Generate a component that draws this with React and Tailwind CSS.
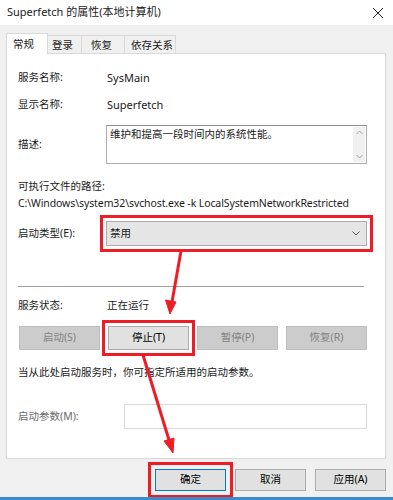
import React from 'react'

const font = { fontFamily: '"Noto Sans", "Noto Sans CJK SC", sans-serif' }

function Btn({ children, disabled, primary, className = '' }) {
  const tone = disabled
    ? 'bg-[#cccccc] border-[#bfbfbf] text-[#838383]'
    : primary
      ? 'bg-[#e1e1e1] border-[#0078d7] text-black'
      : 'bg-[#e1e1e1] border-[#adadad] text-black'
  return (
    <div className={`flex items-center justify-center border whitespace-nowrap ${tone} ${className}`}>
      {children}
    </div>
  )
}

function Row({ label, children, className = '' }) {
  return (
    <div className={`flex items-center ${className}`}>
      <div className="w-[89px] shrink-0">{label}</div>
      {children}
    </div>
  )
}

export default function App() {
  return (
    <div className="relative w-[393px] h-[500px] overflow-hidden bg-[#f0f0f0] text-[10.5px] text-[#1a1a1a]" style={font}>
      {/* title bar */}
      <div className="h-[25px] bg-white flex items-center justify-between pl-[7px] pr-[9px]">
        <span className="text-[11px]">Superfetch 的属性(本地计算机)</span>
        <svg width="12" height="12" viewBox="0 0 12 12" className="text-[#222]">
          <path d="M1 1L11 11M11 1L1 11" stroke="currentColor" strokeWidth="1" />
        </svg>
      </div>

      {/* tabs */}
      <div className="flex items-end h-[28px] pl-[6px] whitespace-nowrap">
        <div className="relative z-10 w-[42px] h-[21px] -mb-px bg-white border border-b-0 border-[#d9d9d9] pl-[6px] pt-[1px] leading-[18px]">常规</div>
        <div className="w-[34px] h-[18px] border border-l-0 border-b-0 border-[#d9d9d9] pl-[4px] leading-[18px]">登录</div>
        <div className="w-[43px] h-[18px] border border-l-0 border-b-0 border-[#d9d9d9] pl-[9px] leading-[18px]">恢复</div>
        <div className="w-[51px] h-[18px] border border-l-0 border-b-0 border-[#d9d9d9] pl-[6px] leading-[18px]">依存关系</div>
      </div>

      {/* panel */}
      <div className="mx-[6px] mr-[7px] h-[406px] bg-white border border-[#d9d9d9] pl-[11px] pr-[18px] pt-[16px]">
        <Row label="服务名称:" className="h-[16px]"><span className="text-[11px]">SysMain</span></Row>
        <Row label="显示名称:" className="h-[16px] mt-[11px]"><span className="text-[11px]">Superfetch</span></Row>
        <Row label="描述:" className="mt-[12px]">
          <div className="flex w-[261px] h-[39px] -ml-px border border-[#abadb3] border-t-[#8e8f8f]">
            <div className="flex-1 pl-[3px] pt-[1px] leading-[14px]">维护和提高一段时间内的系统性能。</div>
            <div className="w-[12px] my-[1px] mr-[1px] bg-[#f0f0f0] flex flex-col justify-between items-center py-[3px] text-[#a0a0a0]">
              <svg width="7" height="5" viewBox="0 0 7 5"><path d="M0.5 4L3.5 1L6.5 4" fill="none" stroke="currentColor" /></svg>
              <svg width="7" height="5" viewBox="0 0 7 5"><path d="M0.5 1L3.5 4L6.5 1" fill="none" stroke="currentColor" /></svg>
            </div>
          </div>
        </Row>
        <div className="mt-[14px] h-[16px] leading-[16px]">可执行文件的路径:</div>
        <div className="mt-[1px] h-[16px] leading-[16px] whitespace-nowrap text-[10.5px] tracking-[-0.1px]">C:\Windows\system32\svchost.exe -k LocalSystemNetworkRestricted</div>

        <Row label="启动类型(E):" className="mt-[10px]">
          <div className="-ml-px w-[261px] h-[25px] bg-[#e5e5e5] border border-[#acacac] flex items-center justify-between pl-[3px] pr-[6px] outline-[3px] outline-solid outline-[#ee1c25] outline-offset-[3px]">
            <span>禁用</span>
            <svg width="8" height="5" viewBox="0 0 8 5" className="text-[#555]"><path d="M0.5 0.5L4 4L7.5 0.5" fill="none" stroke="currentColor" /></svg>
          </div>
        </Row>

        <div className="mt-[40px] mr-[3px] h-px bg-[#a0a0a0]" />

        <Row label="服务状态:" className="mt-[11px] h-[16px]">正在运行</Row>

        <div className="mt-[12px] flex gap-[8px] pl-px">
          <Btn disabled className="w-[81px] h-[24px]">启动(S)</Btn>
          <Btn className="w-[81px] h-[24px] outline-[3px] outline-solid outline-[#ee1c25] outline-offset-[3px]">停止(T)</Btn>
          <Btn disabled className="w-[81px] h-[24px]">暂停(P)</Btn>
          <Btn disabled className="w-[81px] h-[24px]">恢复(R)</Btn>
        </div>

        <div className="mt-[14px] h-[16px] leading-[16px]">当从此处启动服务时，你可指定所适用的启动参数。</div>

        <div className="mt-[24px] flex items-center">
          <div className="w-[106px] shrink-0 text-[#6d6d6d]">启动参数(M):</div>
          <div className="w-[243px] h-[25px] border border-[#d9d9d9]" />
        </div>
      </div>

      {/* footer buttons */}
      <div className="flex justify-end gap-[9px] pr-[7px] mt-[10px]">
        <Btn primary className="w-[71px] h-[22px] outline-[3px] outline-solid outline-[#ee1c25] outline-offset-[4px]">确定</Btn>
        <Btn className="w-[71px] h-[22px]">取消</Btn>
        <Btn className="w-[71px] h-[22px]">应用(A)</Btn>
      </div>

      <div className="absolute left-0 right-0 bottom-0 h-[3px] bg-[#3c8ccc]" />

      {/* red annotation arrows */}
      <svg className="absolute inset-0 pointer-events-none" width="393" height="500" viewBox="0 0 393 500">
        <g stroke="#ee1c25" strokeWidth="3" fill="#ee1c25">
          <line x1="181" y1="251" x2="172" y2="302" />
          <path d="M170 314L165.5 300L176 302Z" strokeWidth="1" />
          <line x1="143" y1="355" x2="169" y2="440" />
          <path d="M173 453L164 441L174 438Z" strokeWidth="1" />
        </g>
      </svg>
    </div>
  )
}
